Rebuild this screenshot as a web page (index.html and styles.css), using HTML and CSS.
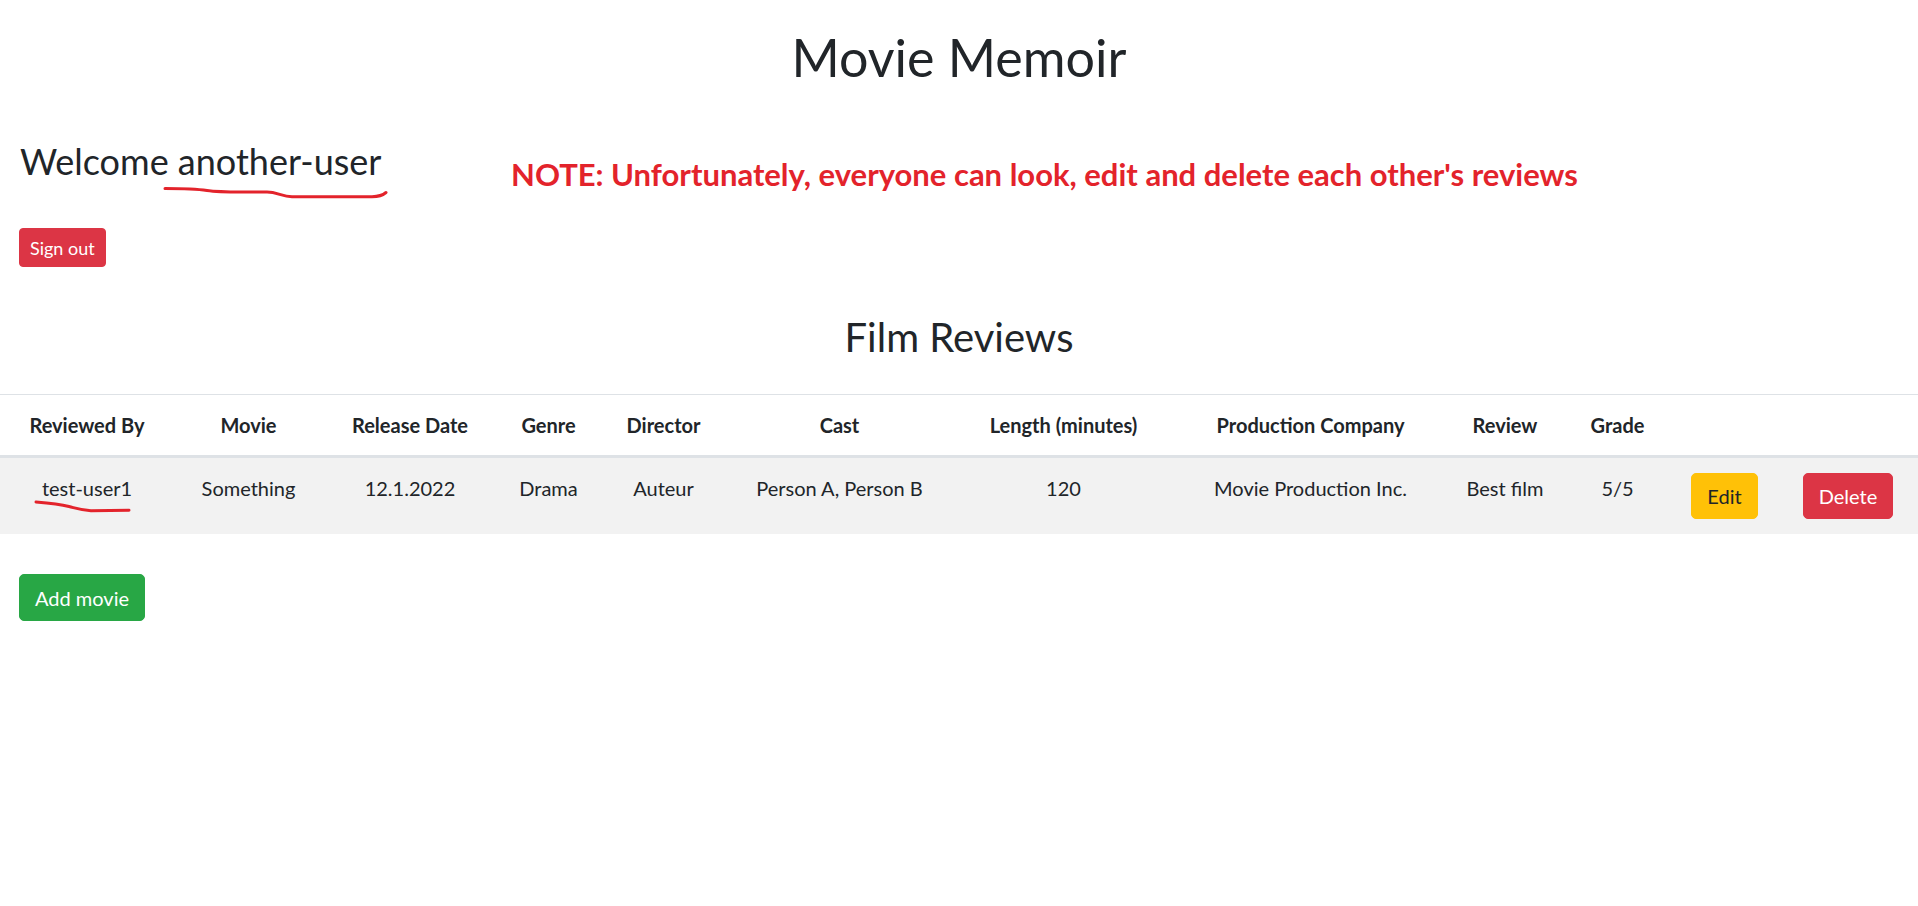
FILE: index.html
```html
<!DOCTYPE html>
<html lang="en">
<head>
<meta charset="utf-8">
<title>Movie Memoir</title>
<link rel="stylesheet" href="styles.css">
</head>
<body>
<div class="page">
  <h1 class="title">Movie Memoir</h1>
  <div class="container">
    <div class="welcome-row">
      <h3 class="welcome">Welcome <span class="marked">another-user<svg class="scribble scribble-user" viewBox="0 0 228 16" width="228" height="16"><path d="M3 3.5 C 20 3.5, 35 4, 45 5.5 S 62 7 80 7 L 105 7 C 115 7, 120 11.5, 130 11.7 L 210 11.7 C 216 11.7, 220 11, 224 7.5" /></svg></span></h3>
      <p class="note">NOTE: Unfortunately, everyone can look, edit and delete each other's reviews</p>
    </div>
    <div class="actions">
      <button class="btn btn-danger btn-sm" type="button">Sign out</button>
    </div>
  </div>

  <h2 class="section-title">Film Reviews</h2>

  <table class="reviews">
    <colgroup>
      <col class="c1"><col class="c2"><col class="c3"><col class="c4"><col class="c5"><col class="c6">
      <col class="c7"><col class="c8"><col class="c9"><col class="c10"><col class="c11"><col class="c12">
    </colgroup>
    <thead>
      <tr>
        <th>Reviewed By</th>
        <th>Movie</th>
        <th>Release Date</th>
        <th>Genre</th>
        <th>Director</th>
        <th>Cast</th>
        <th>Length (minutes)</th>
        <th>Production Company</th>
        <th>Review</th>
        <th>Grade</th>
        <th></th>
        <th></th>
      </tr>
    </thead>
    <tbody>
      <tr>
        <td><span class="marked">test-user1<svg class="scribble scribble-row" viewBox="0 0 100 16" width="100" height="16"><path d="M3 4 C 15 5, 28 6.5, 36 8.5 S 48 12 58 12.8 L 96 12.3" /></svg></span></td>
        <td>Something</td>
        <td>12.1.2022</td>
        <td>Drama</td>
        <td>Auteur</td>
        <td>Person A, Person B</td>
        <td>120</td>
        <td>Movie Production Inc.</td>
        <td>Best film</td>
        <td>5/5</td>
        <td><button class="btn btn-warning" type="button">Edit</button></td>
        <td><button class="btn btn-danger" type="button">Delete</button></td>
      </tr>
    </tbody>
  </table>

  <div class="container">
    <div class="actions add-actions">
      <button class="btn btn-success" type="button">Add movie</button>
    </div>
  </div>
</div>
</body>
</html>
```

FILE: styles.css
```css
html, body {
  margin: 0;
  padding: 0;
  background: #ffffff;
}

body {
  font-family: Lato, "Open Sans", "Noto Sans", sans-serif;
  color: #212529;
  font-size: 20px;
  line-height: 30px;
}

.page {
  position: relative;
}

.title {
  margin: 27px 0 0 0;
  font-size: 52px;
  line-height: 60px;
  font-weight: 400;
  text-align: center;
}

.container {
  padding: 0 19px;
}

.welcome-row {
  display: grid;
  grid-template-columns: 492px auto;
  align-items: start;
  margin-top: 53px;
}

.welcome {
  margin: 0;
  font-size: 36px;
  line-height: 42px;
  font-weight: 400;
  padding-left: 1px;
}

.marked {
  position: relative;
  display: inline-block;
}

.scribble {
  position: absolute;
  fill: none;
  stroke: #e3232b;
  stroke-width: 3;
  stroke-linecap: round;
  stroke-linejoin: round;
  overflow: visible;
}

.scribble-user {
  left: -16px;
  top: 100%;
  margin-top: 3px;
}

.scribble-row {
  left: -9px;
  top: 100%;
  margin-top: -5px;
}

.note {
  margin: 16px 0 0 0;
  font-weight: 700;
  font-size: 31px;
  line-height: 36px;
  color: #e3232b;
  white-space: nowrap;
}

.actions {
  display: flex;
  margin-top: 36px;
}

.btn {
  display: inline-block;
  font-family: inherit;
  font-weight: 400;
  font-size: 20px;
  line-height: 30px;
  padding: 7.5px 15px;
  border: 1px solid transparent;
  border-radius: 5px;
  cursor: pointer;
  vertical-align: top;
}

.btn-sm {
  font-size: 18px;
  line-height: 26px;
  padding: 5.5px 10px;
  border-radius: 4px;
}

.btn-danger {
  color: #ffffff;
  background: #dc3545;
  border-color: #dc3545;
}

.btn-warning {
  color: #212529;
  background: #ffc107;
  border-color: #ffc107;
  padding-top: 7px;
  padding-bottom: 7px;
}

.reviews .btn-danger {
  padding-top: 7px;
  padding-bottom: 7px;
}

.btn-success {
  color: #ffffff;
  background: #28a745;
  border-color: #28a745;
}

.section-title {
  margin: 45.5px 0 33.5px 0;
  font-size: 40px;
  line-height: 48px;
  font-weight: 400;
  text-align: center;
}

.reviews {
  width: 100%;
  border-collapse: collapse;
  table-layout: fixed;
}

.c1 { width: 174px; }
.c2 { width: 149px; }
.c3 { width: 174px; }
.c4 { width: 103px; }
.c5 { width: 127px; }
.c6 { width: 225px; }
.c7 { width: 223px; }
.c8 { width: 271px; }
.c9 { width: 118px; }
.c10 { width: 107px; }
.c11 { width: 107px; }
.c12 { width: 140px; }

.reviews th,
.reviews td {
  padding: 15px 0;
  text-align: center;
  white-space: nowrap;
  border-top: 1px solid #dee2e6;
}

.reviews th {
  font-weight: 700;
  vertical-align: bottom;
  border-bottom: 3px solid #dee2e6;
}

.reviews td {
  vertical-align: top;
}

.reviews tbody tr {
  background: #f2f2f2;
}

.add-actions {
  margin-top: 40px;
}
```
